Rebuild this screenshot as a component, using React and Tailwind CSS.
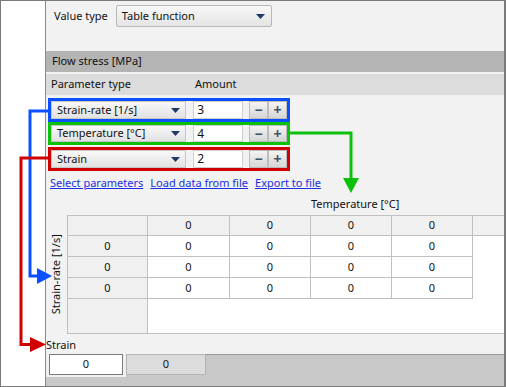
import React from "react";

function Tri({ cls = "" }) {
  return (
    <svg width="9" height="5" viewBox="0 0 9 5" className={cls}>
      <polygon points="0,0 9,0 4.5,5" fill="#1f3a6a" />
    </svg>
  );
}

function Btn({ children }) {
  return (
    <div className="w-[19px] h-full flex items-center justify-center border border-[#bcbcbc] bg-gradient-to-b from-[#f4f4f4] to-[#d6d6d6] text-[#3d5266] font-bold text-[14px] leading-none">
      {children}
    </div>
  );
}

function ParamRow({ border, label, value, h }) {
  return (
    <div className={`flex w-[242px] ${h} border-[3px] ${border}`}>
      <div className="w-[136px] flex items-center justify-between pl-[5px] pr-[5px] border border-[#c6c6c6] bg-gradient-to-b from-[#f8f8f8] to-[#e2e2e2]">
        <span>{label}</span>
        <Tri />
      </div>
      <div className="ml-[7px] w-[50px] bg-white border border-[#cfcfcf] pl-[3px] flex items-center text-[12px]">
        {value}
      </div>
      <div className="ml-[6px] flex">
        <Btn>−</Btn>
        <Btn>+</Btn>
      </div>
    </div>
  );
}

const cols = [82, 81, 81, 81];

export default function App() {
  return (
    <div
      className="relative w-[506px] h-[387px] flex border border-r-2 border-[#7a7a7a] bg-white text-[11px] text-[#111] overflow-hidden"
      style={{ fontFamily: '"Noto Sans", "Open Sans", sans-serif' }}
    >
      <div className="w-[45px] shrink-0 bg-white border-r border-[#8a8a8a]" />
      <div className="flex-1 flex flex-col bg-[#f2f2f2]">
        {/* value type */}
        <div className="h-[50px] flex items-start pt-[4px] pl-[8px]">
          <span className="mt-[3px] mr-[8px]">Value type</span>
          <div className="w-[156px] h-[22px] flex items-center justify-between pl-[5px] pr-[6px] border border-[#b8b8b8] rounded-[2px] bg-gradient-to-b from-[#f8f8f8] to-[#e4e4e4]">
            <span>Table function</span>
            <Tri />
          </div>
        </div>
        <div className="h-[21px] bg-[#b4b4b4] flex items-center pl-[6px]">Flow stress [MPa]</div>
        <div className="h-[2px]" />
        <div className="h-[21px] bg-[#dcdcdc] flex items-center pl-[5px]">
          <span className="w-[144px]">Parameter type</span>
          <span>Amount</span>
        </div>
        <div className="pl-[2px] pt-[3px] flex flex-col">
          <ParamRow border="border-[#0a50ff]" h="h-[24px]" label="Strain-rate [1/s]" value="3" />
          <ParamRow border="border-[#0cc00c]" h="h-[23px]" label="Temperature [°C]" value="4" />
          <div className="h-[2px]" />
          <ParamRow border="border-[#d00000]" h="h-[24px]" label="Strain" value="2" />
        </div>
        <div className="flex gap-[7px] pl-[4px] mt-[2px] h-[20px] items-center text-[#1a2fe0] underline">
          <span>Select parameters</span>
          <span>Load data from file</span>
          <span>Export to file</span>
        </div>
        <div className="h-[22px] flex items-center pl-[265px]">Temperature [°C]</div>
        {/* table */}
        <div className="flex h-[119px]">
          <div className="w-[21px] flex items-center justify-center">
            <span className="whitespace-nowrap -rotate-90">Strain-rate [1/s]</span>
          </div>
          <div className="flex-1 flex border-l border-t border-b border-[#c0c0c0]">
            <div className="w-[80px] flex flex-col bg-[#f0f0f0] border-r border-[#c0c0c0]">
              <div className="h-[20px] border-b border-[#c0c0c0]" />
              {[0, 1, 2].map((i) => (
                <div key={i} className="h-[21px] border-b border-[#c0c0c0] flex items-center justify-center">0</div>
              ))}
            </div>
            <div className="flex-1 flex flex-col bg-white">
              <div className="h-[20px] flex bg-[#f0f0f0] border-b border-[#c0c0c0]">
                {cols.map((w, i) => (
                  <div key={i} style={{ width: w }} className="border-r border-[#c0c0c0] flex items-center justify-center">0</div>
                ))}
              </div>
              {[0, 1, 2].map((r) => (
                <div key={r} className="h-[21px] flex">
                  {cols.map((w, i) => (
                    <div key={i} style={{ width: w }} className="border-r border-b border-[#c0c0c0] flex items-center justify-center">0</div>
                  ))}
                </div>
              ))}
            </div>
          </div>
        </div>
        <div className="h-[20px] flex items-end pb-[1px]">
          <span>Strain</span>
        </div>
        {/* tabs */}
        <div className="flex-1 flex bg-[#c8c8c8] border-t border-[#9a9a9a]">
          <div className="h-[23px] w-[80px] bg-[#f0f0f0] -mt-px pl-[3px]">
            <div className="w-[74px] h-[21px] bg-white border border-[#7a7a7a] flex items-center justify-center">0</div>
          </div>
          <div className="h-[21px] w-[80px] -mt-px bg-[#dcdcdc] border border-[#b4b4b4] flex items-center justify-center">0</div>
        </div>
      </div>
      {/* annotation arrows */}
      <svg className="absolute left-[-1px] top-[-1px] pointer-events-none" width="506" height="387">
        <polyline points="50,111 30,111 30,276 40,276" fill="none" stroke="#0a50ff" strokeWidth="3" />
        <polygon points="37,268 52,276 37,284" fill="#0a50ff" />
        <polyline points="50,158 21,158 21,344.5 33,344.5" fill="none" stroke="#d00000" strokeWidth="3" />
        <polygon points="30,337 46,344.5 30,352" fill="#d00000" />
        <polyline points="290,133 351,133 351,181" fill="none" stroke="#0cc00c" strokeWidth="3" />
        <polygon points="343,178 359,178 351,193" fill="#0cc00c" />
      </svg>
    </div>
  );
}
